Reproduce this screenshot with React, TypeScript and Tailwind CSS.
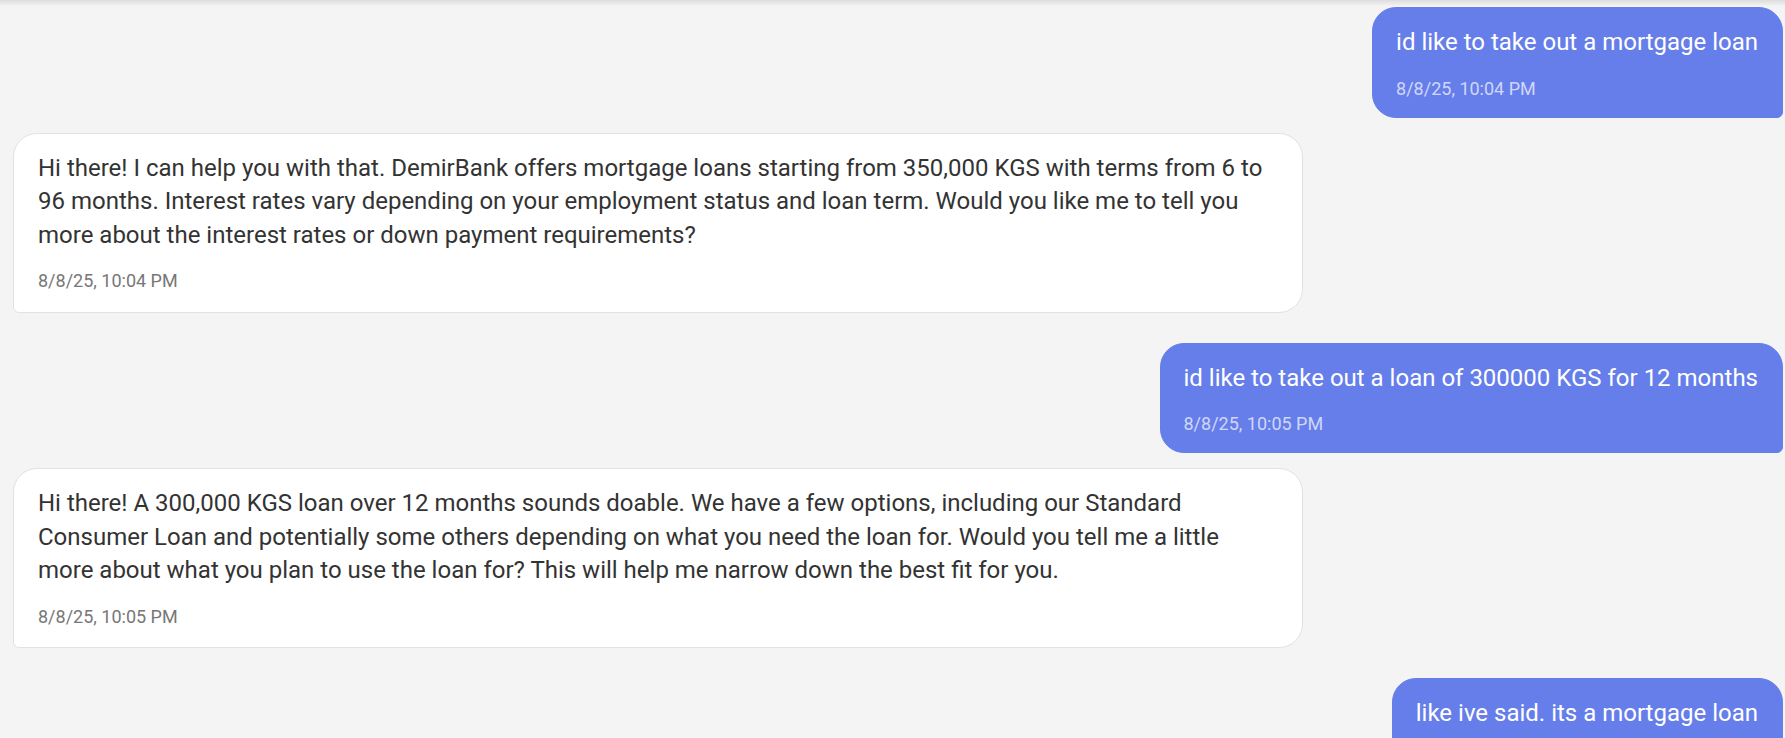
type Message = {
  id: number;
  role: "user" | "assistant";
  text: string;
  time: string;
};

const messages: Message[] = [
  { id: 1, role: "user", text: "id like to take out a mortgage loan", time: "8/8/25, 10:04 PM" },
  {
    id: 2,
    role: "assistant",
    text: "Hi there! I can help you with that. DemirBank offers mortgage loans starting from 350,000 KGS with terms from 6 to 96 months. Interest rates vary depending on your employment status and loan term. Would you like me to tell you more about the interest rates or down payment requirements?",
    time: "8/8/25, 10:04 PM",
  },
  { id: 3, role: "user", text: "id like to take out a loan of 300000 KGS for 12 months", time: "8/8/25, 10:05 PM" },
  {
    id: 4,
    role: "assistant",
    text: "Hi there! A 300,000 KGS loan over 12 months sounds doable. We have a few options, including our Standard Consumer Loan and potentially some others depending on what you need the loan for. Would you tell me a little more about what you plan to use the loan for? This will help me narrow down the best fit for you.",
    time: "8/8/25, 10:05 PM",
  },
  { id: 5, role: "user", text: "like ive said. its a mortgage loan", time: "8/8/25, 10:06 PM" },
];

function Bubble({ message }: { message: Message }) {
  const isUser = message.role === "user";

  return (
    <div className={`flex ${isUser ? "justify-end mb-[15px]" : "justify-start mb-[30px]"}`}>
      <div
        className={`max-w-[1290px] border rounded-[24px] ${
          isUser
            ? "pl-[23px] pr-6 py-[18px] bg-[#667eea] border-[#667eea] text-white rounded-br-[6px]"
            : "px-6 pt-[18px] pb-[20px] bg-white border-[#e2e2e2] text-[#333333] rounded-bl-[6px]"
        }`}
      >
        <p className="text-[24px] leading-[1.4]">{message.text}</p>
        <div
          className={`mt-[18px] text-[18px] leading-[1.172] ${
            isUser ? "text-white/70" : "text-[#777777]"
          }`}
        >
          {message.time}
        </div>
      </div>
    </div>
  );
}

export default function App() {
  return (
    <div className="relative h-[738px] overflow-hidden bg-[#f4f4f4] font-['Roboto',sans-serif]">
      {/* header shadow */}
      <div className="absolute inset-x-0 top-0 h-[6px] bg-gradient-to-b from-black/10 to-transparent" />

      {/* Lista de mensagens */}
      <div className="flex flex-col pt-[7px] pl-[13px] pr-[2px]">
        {messages.map((m) => (
          <Bubble key={m.id} message={m} />
        ))}
      </div>
    </div>
  );
}
